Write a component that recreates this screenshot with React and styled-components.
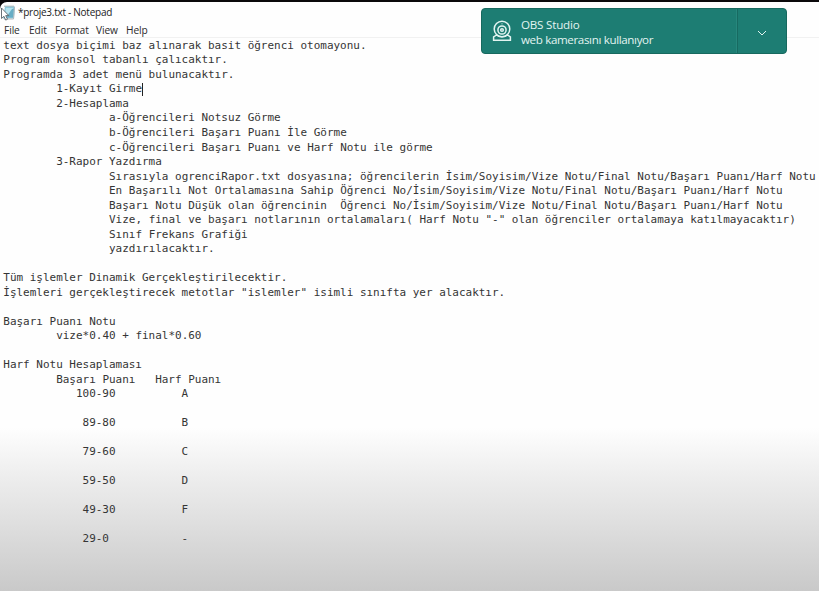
import React from "react";
import styled, { createGlobalStyle } from "styled-components";

const GlobalStyle = createGlobalStyle`
  * { box-sizing: border-box; }
  body { margin: 0; overflow: hidden; background: #0b090b; }
`;

const Screen = styled.div`
  position: relative;
  width: 819px;
  height: 591px;
  padding-top: 2px;
  background: #0b090b;
  overflow: hidden;
`;

const Window = styled.main`
  display: flex;
  flex-direction: column;
  height: 589px;
  border-top-left-radius: 7px;
  background: linear-gradient(#fefefe 0, #fefefe 426px, #efefef 470px, #dcdcdc 530px, #c9c9c9 589px);
`;

const TitleBar = styled.header`
  display: flex;
  align-items: center;
  height: 20px;
  gap: 2px;
  font: 10px/20px "Open Sans", "Noto Sans", sans-serif;
  color: #222;
`;

const TitleText = styled.span`
  display: block;
  letter-spacing: -0.26px;
  white-space: pre;
`;

const MenuBar = styled.nav`
  display: flex;
  height: 16px;
  padding-left: 4px;
  border-bottom: 1px solid #f1f1f1;
  font: 10.2px/16px "Open Sans", "Noto Sans", sans-serif;
  color: #2b2b2b;
`;

const MenuItem = styled.span`
  width: ${(p) => p.$width}px;
  letter-spacing: -0.1px;
`;

const Document = styled.section`
  padding: 0.9px 0 0 3.3px;
  font: 10.975px/14.53px "DejaVu Sans Mono", monospace;
  color: #353535;
`;

const Line = styled.div`
  display: flex;
  align-items: center;
  height: 14.53px;
  padding-left: ${(p) => (p.$tabs || 0) * 52.86}px;
  white-space: pre;
`;

const Caret = styled.span`
  width: 1px;
  height: 13px;
  background: #222;
`;

const GradeRow = styled(Line)`
  display: grid;
  grid-template-columns: 99px 80px;
  margin-bottom: ${(p) => (p.$spaced ? 14.53 : 0)}px;
`;

const GradeCell = styled.span`
  padding-left: ${(p) => (p.$indent || 0) * 6.6}px;
`;

const Notification = styled.aside`
  position: absolute;
  left: 481px;
  top: 8px;
  display: flex;
  width: 306px;
  height: 46px;
  border: 1px solid #17695f;
  border-radius: 4px;
  background: #1d7d73;
  color: #e2f4f1;
`;

const NotificationBody = styled.div`
  display: flex;
  flex: 1;
  align-items: center;
  gap: 9px;
  padding-left: 10px;
  font: 11.6px/15px "Open Sans", "Noto Sans", sans-serif;
`;

const Message = styled.div`
  display: flex;
  flex-direction: column;
  padding-top: 1px;
`;

const MessageLine = styled.span`
  letter-spacing: ${(p) => p.$tracking}px;
  white-space: nowrap;
`;

const Expand = styled.div`
  display: flex;
  align-items: center;
  justify-content: center;
  width: 49px;
  padding-top: 3px;
  border-left: 1px solid #176a61;
  box-shadow: -1px 0 #27877d;
`;

const NotepadIcon = () => (
  <svg width="16" height="19" viewBox="0 0 16 19">
    <path d="M5 3.5h10l-1 12H3z" fill="#8cc9dc" />
    <path d="M6 5h7.5l-.7 8.8H4.8z" fill="#b5e3ee" />
    <path d="M12 6l2-.5-.8 9H6z" fill="#67adc5" />
    <path d="M4 3.2h10" stroke="#9fb0b6" />
    <path d="M14.5 4l-1 12H4" fill="none" stroke="#b5babd" />
    <path d="M1.5 5v10.5l2.4-2.2 1.8 3.8 1.8-.9-1.8-3.6h3.1z" fill="#fff" stroke="#596268" strokeWidth=".9" />
  </svg>
);

const WebcamIcon = () => (
  <svg width="20" height="22" viewBox="0 0 20 22" fill="none" stroke="currentColor" strokeWidth="1.5">
    <circle cx="10" cy="9" r="7.8" />
    <circle cx="10" cy="10" r="4.1" />
    <circle cx="10" cy="10" r="1.3" />
    <circle cx="10" cy="3.8" r=".6" fill="currentColor" stroke="none" />
    <path d="M4.5 15 1.6 17v3.2h16.8V17l-2.9-2M4.5 15c3 2.4 8 2.4 11 0" />
  </svg>
);

const menu = [["File", 25], ["Edit", 26], ["Format", 41], ["View", 30], ["Help", 26]];

const lines = [
  [0, "text dosya biçimi baz alınarak basit öğrenci otomayonu."],
  [0, "Program konsol tabanlı çalıcaktır."],
  [0, "Programda 3 adet menü bulunacaktır."],
  [1, "1-Kayıt Girme", true],
  [1, "2-Hesaplama"],
  [2, "a-Öğrencileri Notsuz Görme"],
  [2, "b-Öğrencileri Başarı Puanı İle Görme"],
  [2, "c-Öğrencileri Başarı Puanı ve Harf Notu ile görme"],
  [1, "3-Rapor Yazdırma"],
  [2, "Sırasıyla ogrenciRapor.txt dosyasına; öğrencilerin İsim/Soyisim/Vize Notu/Final Notu/Başarı Puanı/Harf Notu"],
  [2, "En Başarılı Not Ortalamasına Sahip Öğrenci No/İsim/Soyisim/Vize Notu/Final Notu/Başarı Puanı/Harf Notu"],
  [2, "Başarı Notu Düşük olan öğrencinin  Öğrenci No/İsim/Soyisim/Vize Notu/Final Notu/Başarı Puanı/Harf Notu"],
  [2, 'Vize, final ve başarı notlarının ortalamaları( Harf Notu "-" olan öğrenciler ortalamaya katılmayacaktır)'],
  [2, "Sınıf Frekans Grafiği"],
  [2, "yazdırılacaktır."],
  [0, ""],
  [0, "Tüm işlemler Dinamik Gerçekleştirilecektir."],
  [0, 'İşlemleri gerçekleştirecek metotlar "islemler" isimli sınıfta yer alacaktır.'],
  [0, ""],
  [0, "Başarı Puanı Notu"],
  [1, "vize*0.40 + final*0.60"],
  [0, ""],
  [0, "Harf Notu Hesaplaması"],
];

const grades = [
  ["100-90", "A", 3],
  ["89-80", "B", 4],
  ["79-60", "C", 4],
  ["59-50", "D", 4],
  ["49-30", "F", 4],
  ["29-0", "-", 4],
];

export default function App() {
  return (
    <Screen>
      <GlobalStyle />
      <Window>
        <TitleBar>
          <NotepadIcon />
          <TitleText>*proje3.txt - Notepad</TitleText>
        </TitleBar>
        <MenuBar>
          {menu.map(([label, width]) => (
            <MenuItem key={label} $width={width}>{label}</MenuItem>
          ))}
        </MenuBar>
        <Document>
          {lines.map(([tabs, text, caret], i) => (
            <Line key={i} $tabs={tabs}>
              {text}
              {caret && <Caret />}
            </Line>
          ))}
          <GradeRow $tabs={1}>
            <GradeCell>Başarı Puanı</GradeCell>
            <GradeCell>Harf Puanı</GradeCell>
          </GradeRow>
          {grades.map(([range, letter, indent]) => (
            <GradeRow key={range} $tabs={1} $spaced>
              <GradeCell $indent={indent}>{range}</GradeCell>
              <GradeCell $indent={4}>{letter}</GradeCell>
            </GradeRow>
          ))}
        </Document>
      </Window>
      <Notification>
        <NotificationBody>
          <WebcamIcon />
          <Message>
            <MessageLine $tracking={-0.2}>OBS Studio</MessageLine>
            <MessageLine $tracking={-0.36}>web kamerasını kullanıyor</MessageLine>
          </Message>
        </NotificationBody>
        <Expand>
          <svg width="10" height="6" viewBox="0 0 10 6" fill="none" stroke="currentColor">
            <path d="M1 1l4 4 4-4" />
          </svg>
        </Expand>
      </Notification>
    </Screen>
  );
}
